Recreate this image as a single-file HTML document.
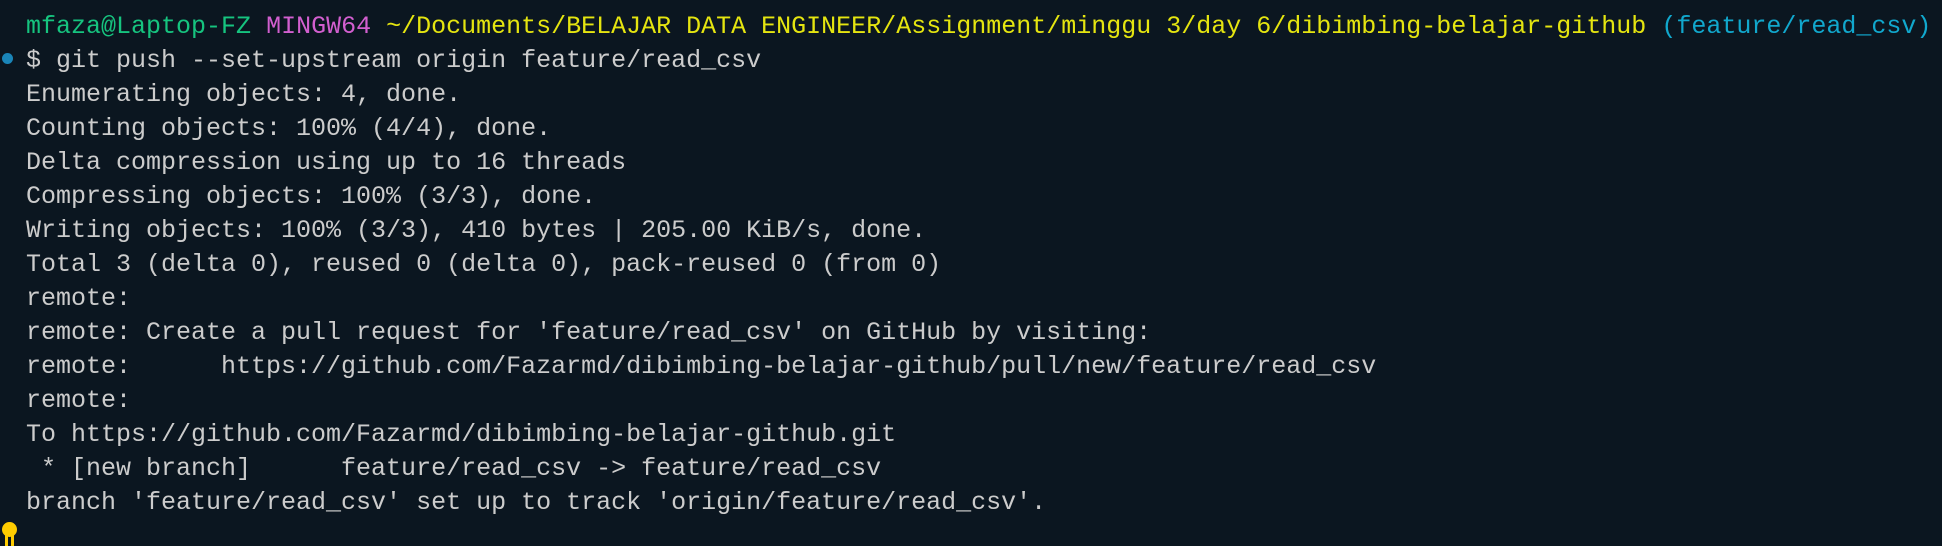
<!DOCTYPE html>
<html><head><meta charset="utf-8"><style>
html,body{margin:0;padding:0;background:#0b1620;width:1942px;height:546px;overflow:hidden}
pre{position:absolute;left:26px;top:10px;margin:0;font-family:"Liberation Mono",monospace;font-size:25px;line-height:34px;color:#cccccc;white-space:pre}
.g{color:#16c47f}.m{color:#d25fcf}.y{color:#e5e510}.c{color:#11a8cd}
.dot{position:absolute;left:2px;top:53px;width:11px;height:11px;border-radius:50%;background:#1a85b8}
.bulb{position:absolute;left:2px;top:522px;width:15px;height:15px;border-radius:50%;background:#ffcc00}
.s1,.s2{position:absolute;top:535px;width:3px;height:11px;background:#ffcc00}
.s1{left:5px}.s2{left:11px}
</style></head><body>
<div class="dot"></div>
<div class="bulb"></div><div class="s1"></div><div class="s2"></div>
<pre><span class="g">mfaza@Laptop-FZ</span> <span class="m">MINGW64</span> <span class="y">~/Documents/BELAJAR DATA ENGINEER/Assignment/minggu 3/day 6/dibimbing-belajar-github</span> <span class="c">(feature/read_csv)</span>
$ git push --set-upstream origin feature/read_csv
Enumerating objects: 4, done.
Counting objects: 100% (4/4), done.
Delta compression using up to 16 threads
Compressing objects: 100% (3/3), done.
Writing objects: 100% (3/3), 410 bytes | 205.00 KiB/s, done.
Total 3 (delta 0), reused 0 (delta 0), pack-reused 0 (from 0)
remote:
remote: Create a pull request for 'feature/read_csv' on GitHub by visiting:
remote:      https://github.com/Fazarmd/dibimbing-belajar-github/pull/new/feature/read_csv
remote:
To https://github.com/Fazarmd/dibimbing-belajar-github.git
 * [new branch]      feature/read_csv -&gt; feature/read_csv
branch 'feature/read_csv' set up to track 'origin/feature/read_csv'.</pre>
</body></html>
